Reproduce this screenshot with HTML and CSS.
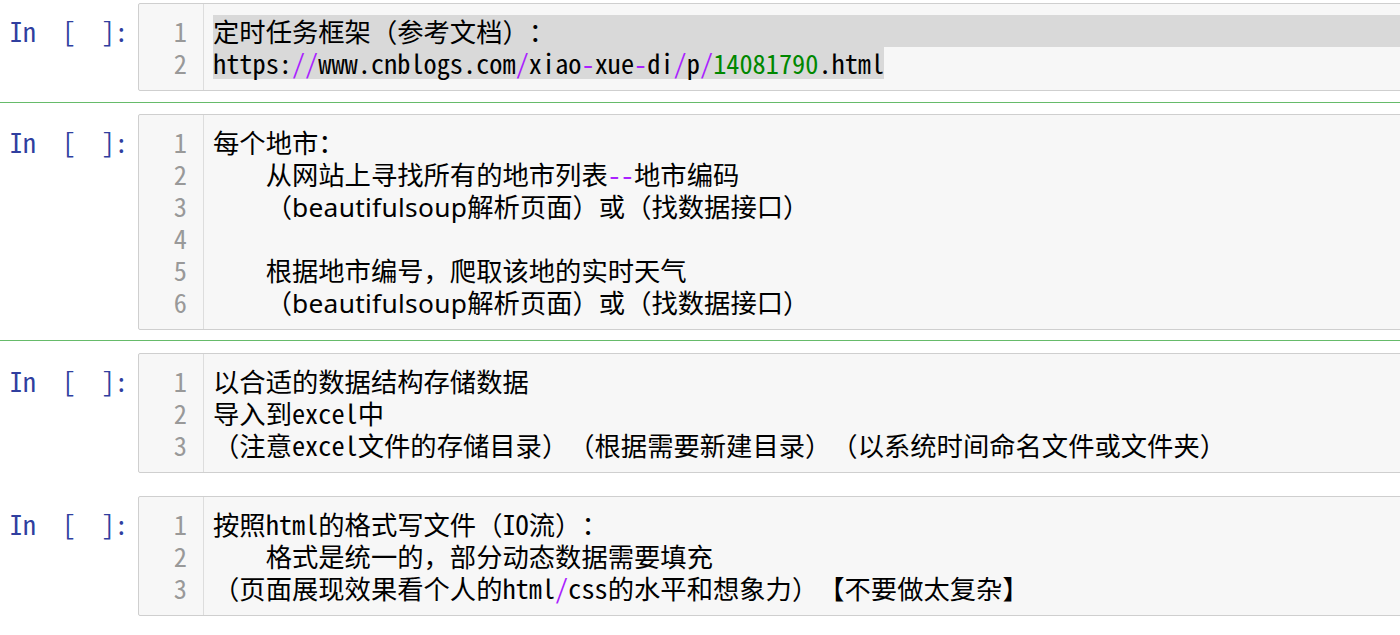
FILE: index.html
```html
<!DOCTYPE html>
<html lang="zh-CN">
<head>
<meta charset="utf-8">
<title>Notebook</title>
<link rel="stylesheet" href="styles.css">
</head>
<body>
<div class="notebook">
  <div class="cell first">
    <div class="prompt">In&nbsp;&nbsp;[&nbsp;&nbsp;]:</div>
    <div class="input">
      <div class="gutter"><div>1</div><div>2</div></div>
      <div class="code">
        <div class="line"><span class="sel-full">定时任务框架（参考文档）：</span></div>
        <div class="line"><span class="sel">https:<span class="op">//</span>www.cnblogs.com<span class="op">/</span>xiao<span class="op">-</span>xue<span class="op">-</span>di<span class="op">/</span>p<span class="op">/</span><span class="num">14081790</span>.html</span></div>
      </div>
    </div>
  </div>
  <div class="cell selected">
    <div class="prompt">In&nbsp;&nbsp;[&nbsp;&nbsp;]:</div>
    <div class="input">
      <div class="gutter"><div>1</div><div>2</div><div>3</div><div>4</div><div>5</div><div>6</div></div>
      <div class="code">
        <div class="line">每个地市：</div>
        <div class="line">    从网站上寻找所有的地市列表<span class="op">--</span>地市编码</div>
        <div class="line">    （<span class="prop">beautifulsoup</span>解析页面）或（找数据接口）</div>
        <div class="line"> </div>
        <div class="line">    根据地市编号，爬取该地的实时天气</div>
        <div class="line">    （<span class="prop">beautifulsoup</span>解析页面）或（找数据接口）</div>
      </div>
    </div>
  </div>
  <div class="cell">
    <div class="prompt">In&nbsp;&nbsp;[&nbsp;&nbsp;]:</div>
    <div class="input">
      <div class="gutter"><div>1</div><div>2</div><div>3</div></div>
      <div class="code">
        <div class="line">以合适的数据结构存储数据</div>
        <div class="line">导入到excel中</div>
        <div class="line">（注意excel文件的存储目录）（根据需要新建目录）（以系统时间命名文件或文件夹）</div>
      </div>
    </div>
  </div>
  <div class="cell">
    <div class="prompt">In&nbsp;&nbsp;[&nbsp;&nbsp;]:</div>
    <div class="input">
      <div class="gutter"><div>1</div><div>2</div><div>3</div></div>
      <div class="code">
        <div class="line">按照html的格式写文件（IO流）：</div>
        <div class="line">    格式是统一的，部分动态数据需要填充</div>
        <div class="line">（页面展现效果看个人的html<span class="op">/</span>css的水平和想象力）【不要做太复杂】</div>
      </div>
    </div>
  </div>
</div>
</body>
</html>
```

FILE: styles.css
```css
html, body {
  margin: 0;
  padding: 0;
  background: #ffffff;
  overflow: hidden;
}

.notebook {
  width: 1440px;
  font-family: "Noto Sans Mono CJK SC", "Liberation Mono", "Noto Sans CJK SC", monospace;
  font-size: 26.32px;
  line-height: 32px;
  color: #000000;
  text-spacing-trim: space-all;
  font-kerning: none;
}

.cell {
  display: flex;
  align-items: flex-start;
  padding: 11px 0 10px 0;
  border-top: 1px solid transparent;
  border-bottom: 1px solid transparent;
}

.cell.first {
  padding-top: 2px;
}

.cell.selected {
  border-top-color: #66bb6a;
  border-bottom-color: #66bb6a;
}

.prompt {
  width: 128px;
  flex: none;
  text-align: right;
  color: #303f9f;
  padding-top: 12px;
  white-space: pre;
}

.input {
  flex: 1;
  margin-left: 10px;
  display: flex;
  background: #f7f7f7;
  border: 1px solid #cfcfcf;
  border-radius: 2px;
}

.gutter {
  width: 48px;
  flex: none;
  padding: 11px 16px 11px 0;
  border-right: 1px solid #dddddd;
  text-align: right;
  color: #999999;
}

.code {
  flex: 1;
  padding: 11px 0 11px 9px;
}

.line {
  white-space: pre;
  height: 32px;
}

.sel-full {
  display: block;
  background: #d9d9d9;
}

.sel {
  display: inline-block;
  background: #d9d9d9;
}

.op {
  color: #aa22ff;
}

.num {
  color: #008800;
}

.prop {
  font-family: "Noto Sans", "Liberation Sans", sans-serif;
  letter-spacing: 0.3px;
}
```
